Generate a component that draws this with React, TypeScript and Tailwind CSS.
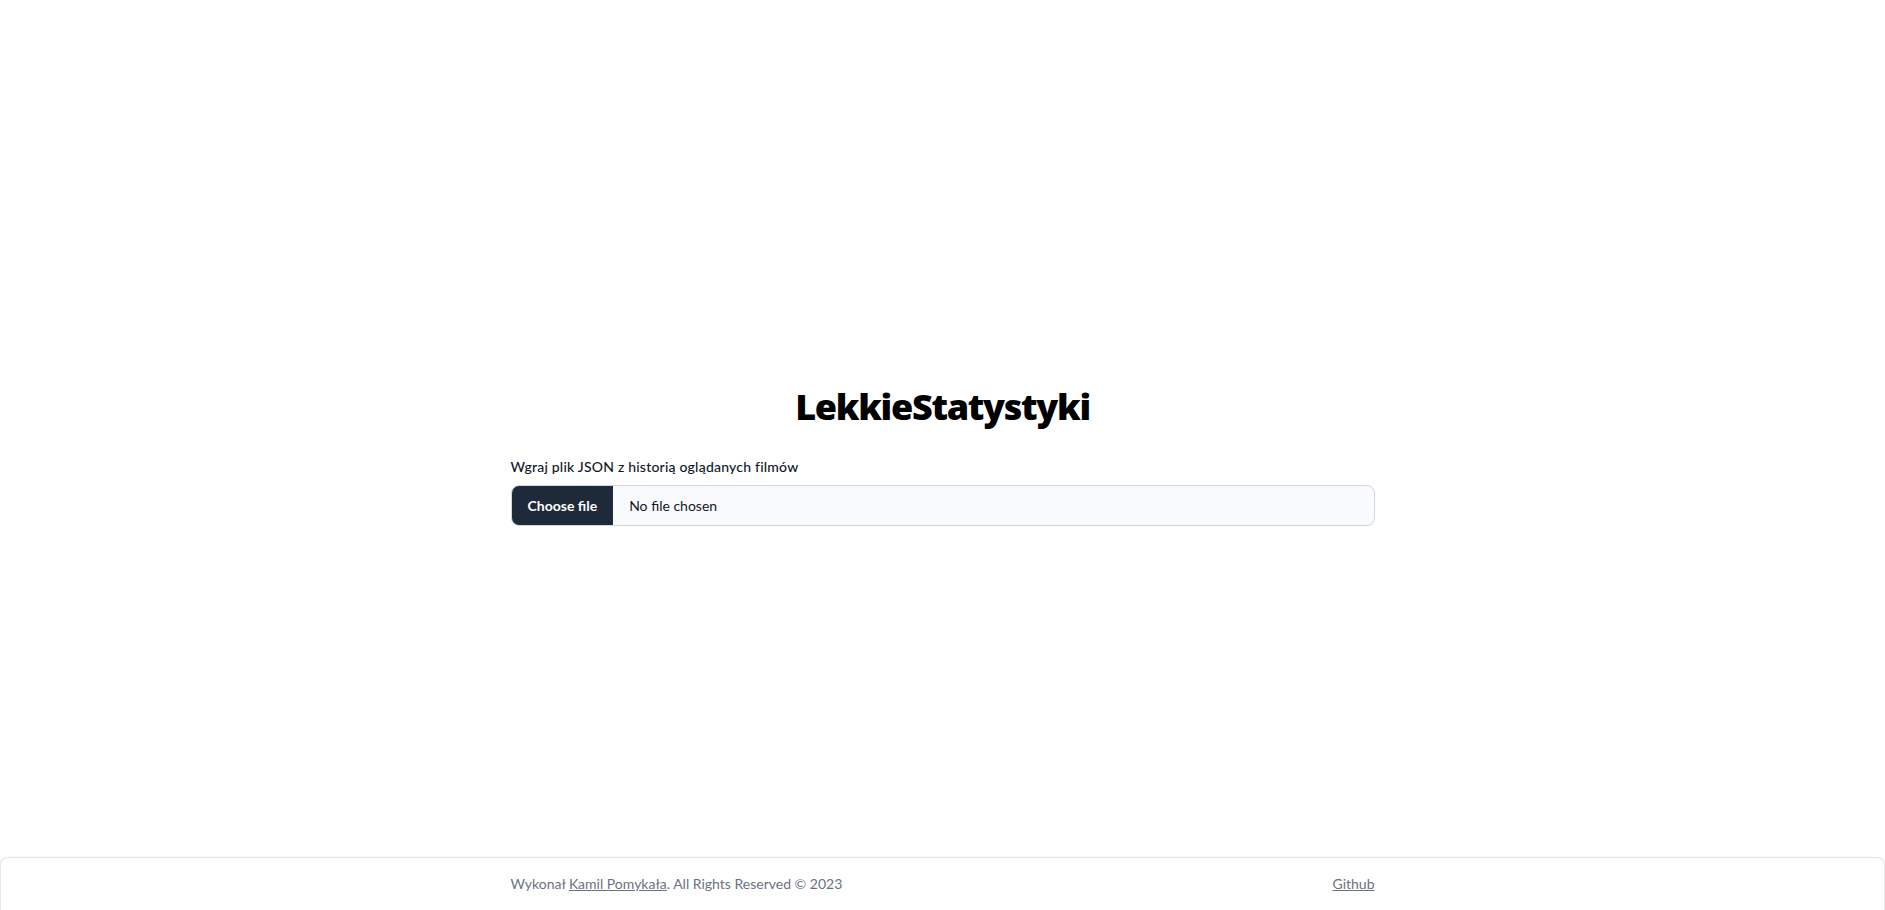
export default function App() {
  return (
    <div className="min-h-screen flex flex-col bg-white font-['Lato','Liberation_Sans',sans-serif] text-gray-900">
      {/* Upload */}
      <main className="flex-1 flex items-center justify-center pt-14">
        <div className="w-full max-w-4xl px-4">
          <h1 className="text-4xl leading-10 font-extrabold tracking-[-0.036em] text-black text-center mb-[30px] font-['Open_Sans','Liberation_Sans',sans-serif]">
            LekkieStatystyki
          </h1>
          <label className="block text-sm font-medium tracking-[0.015em] text-gray-900 mb-2" htmlFor="file">
            Wgraj plik JSON z historią oglądanych filmów
          </label>
          <label
            htmlFor="file"
            className="flex items-center h-[41px] w-full rounded-lg border border-gray-300 bg-gray-50 overflow-hidden cursor-pointer text-sm"
          >
            <span className="h-full flex items-center px-4 bg-gray-800 text-white font-bold">
              Choose file
            </span>
            <span className="pl-4 text-gray-900">No file chosen</span>
            <input id="file" type="file" accept=".json" className="hidden" />
          </label>
        </div>
      </main>

      {/* Footer */}
      <footer className="bg-white rounded-t-lg border-t border-x border-gray-200 shadow-sm">
        <div className="max-w-4xl mx-auto px-4 py-4 flex items-center justify-between text-sm text-gray-500">
          <span>
            Wykonał{" "}
            <a href="#" className="underline">
              Kamil Pomykała
            </a>
            . All Rights Reserved © 2023
          </span>
          <a href="#" className="underline">
            Github
          </a>
        </div>
      </footer>
    </div>
  );
}
